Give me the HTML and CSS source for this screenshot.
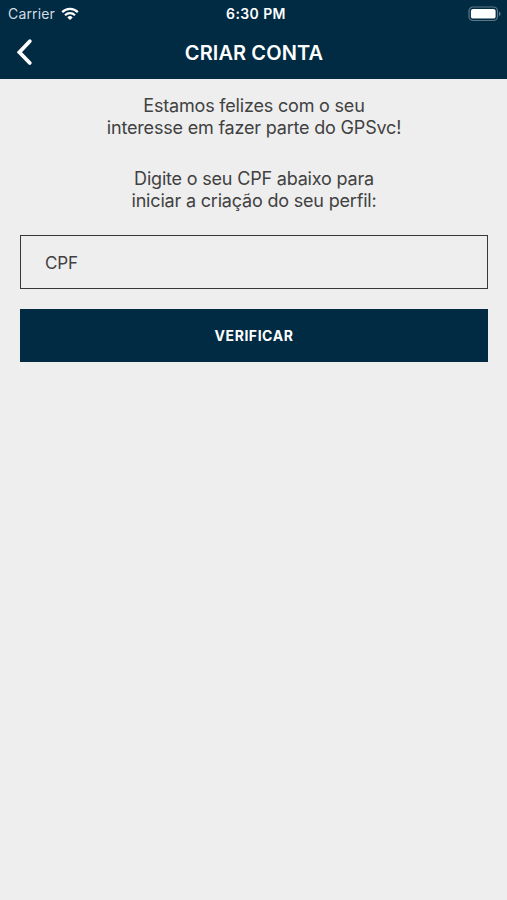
FILE: index.html
```html
<!DOCTYPE html>
<html lang="pt-BR">
<head>
<meta charset="utf-8">
<meta name="viewport" content="width=device-width, initial-scale=1">
<title>Criar conta</title>
<link rel="stylesheet" href="styles.css">
</head>
<body>
<header class="header">
  <div class="status">
    <div class="network">
      <span class="carrier">Carrier</span>
      <svg class="wifi" width="18" height="14" viewBox="0 0 18 14" fill="none" stroke="#fff" stroke-width="2.2">
        <path d="M1.2 5.1a11.1 11.1 0 0 1 15.6 0"/>
        <path d="M4 8.2a7.2 7.2 0 0 1 10 0"/>
        <path d="M9 13L6.3 10.4a3.9 3.9 0 0 1 5.4 0Z" fill="#fff" stroke="none"/>
      </svg>
    </div>
    <span class="time">6:30 PM</span>
    <svg class="battery" width="33" height="16" viewBox="0 0 33 16">
      <rect x="1" y="1" width="28.5" height="13.5" rx="4" fill="none" stroke="#5d7889" stroke-width="1.2"/>
      <rect x="2.9" y="2.9" width="24.7" height="9.7" rx="2.2" fill="#fff"/>
      <path d="M31 5.4q1.6.6 1.6 2.4T31 10.2Z" fill="#5d7889"/>
    </svg>
  </div>
  <nav class="navbar">
    <svg class="back" width="18" height="28" viewBox="0 0 18 28" fill="none" stroke="#fff" stroke-width="3.8" stroke-linecap="round" stroke-linejoin="miter">
      <path d="M14.8 3.2L4.4 14.2L14.8 25"/>
    </svg>
    <h1 class="title">CRIAR CONTA</h1>
  </nav>
</header>
<main class="content">
  <p class="message">Estamos felizes com o seu<br>interesse em fazer parte do GPSvc!</p>
  <p class="message prompt">Digite o seu CPF abaixo para<br>iniciar a criação do seu perfil:</p>
  <div class="field">CPF</div>
  <button class="submit" type="button">VERIFICAR</button>
</main>
</body>
</html>
```

FILE: styles.css
```css
* {
  box-sizing: border-box;
}

body {
  margin: 0;
  min-height: 900px;
  background: #eeeeee;
  color: #414141;
  font-family: Inter, "Liberation Sans", sans-serif;
}

.header {
  height: 79px;
  background: #002b43;
  color: #fff;
}

.status {
  display: grid;
  grid-template-columns: 1fr auto 1fr;
  align-items: center;
  height: 27px;
  padding: 0 6px 0 8px;
}

.network {
  display: flex;
  align-items: center;
  gap: 6px;
}

.carrier {
  color: #d3dce2;
  font-size: 14px;
  letter-spacing: 0.15px;
}

.time {
  padding-left: 3px;
  font-size: 14px;
  font-weight: 600;
  letter-spacing: 0.4px;
}

.battery {
  justify-self: end;
}

.navbar {
  display: grid;
  grid-template-columns: 18px 1fr 18px;
  align-items: center;
  height: 50px;
  padding: 0 15px;
}

.title {
  margin: 0;
  padding: 2px 0 0 1px;
  font-size: 20px;
  font-weight: 600;
  letter-spacing: 0.1px;
  text-align: center;
}

.content {
  display: flex;
  flex-direction: column;
  padding: 16px 19px 0 20px;
}

.message {
  margin: 0;
  font-size: 18px;
  letter-spacing: -0.19px;
  line-height: 21.5px;
  text-align: center;
}

.prompt {
  margin-top: 30px;
}

.field {
  display: flex;
  align-items: center;
  height: 54px;
  margin-top: 24px;
  padding: 2px 24px 0;
  border: 1.5px solid #383838;
  font-size: 17px;
  letter-spacing: -0.2px;
}

.submit {
  height: 53px;
  margin-top: 20px;
  padding: 0;
  border: 0;
  background: #002b43;
  color: #fff;
  font: 700 14px Inter, "Liberation Sans", sans-serif;
  letter-spacing: 0.55px;
}
```
